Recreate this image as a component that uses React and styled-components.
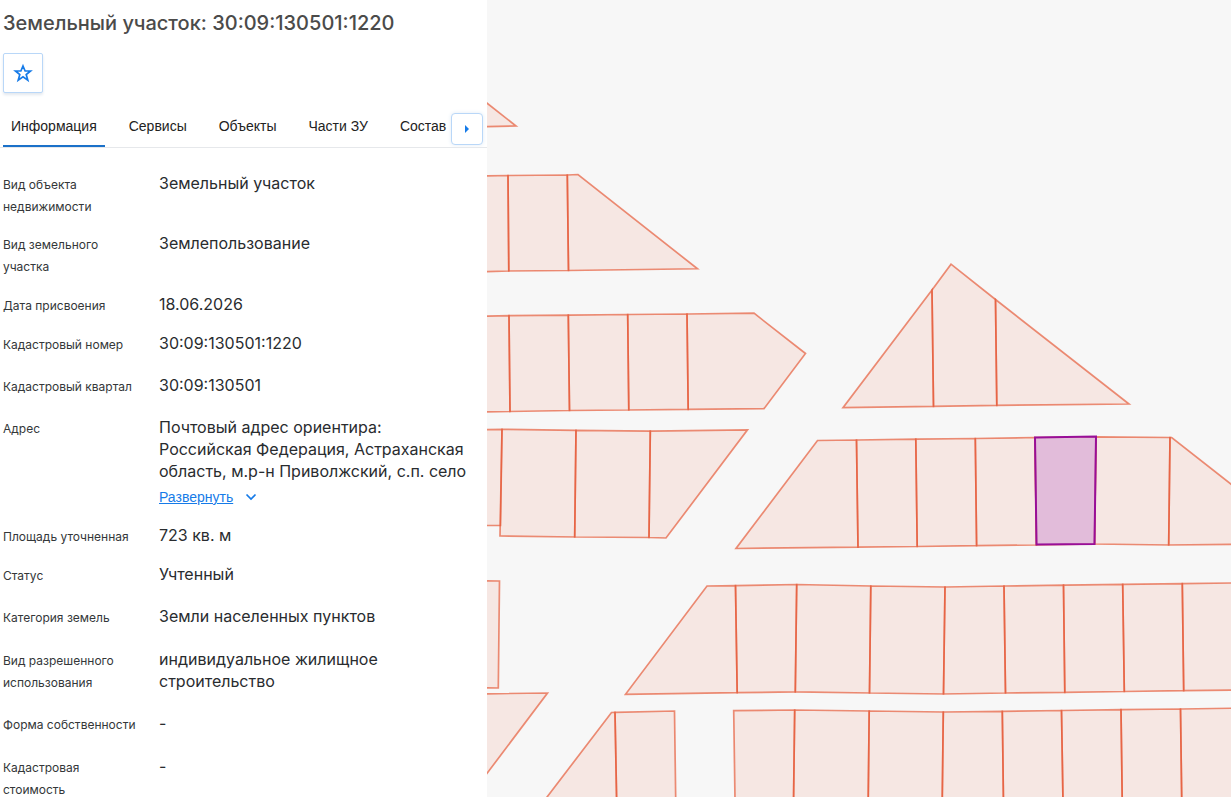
import React from "react";
import styled, { createGlobalStyle } from "styled-components";

const GlobalStyle = createGlobalStyle`
  * { box-sizing: border-box; }
  html, body, #root { height: 100%; }
  body { margin: 0; background: #fff; overflow: hidden; font-family: Inter, sans-serif; }
`;

const Page = styled.div`
  display: flex;
  height: 100%;
`;

const Panel = styled.aside`
  flex: 0 1 487px;
  min-width: 320px;
  overflow: hidden;
  background: #fff;
  color: #292c2f;
`;

const Title = styled.h1`
  margin: 0;
  padding: 9px 3px 16px;
  font-size: 20px;
  line-height: 28px;
  font-weight: 500;
  color: #4b4b4a;
`;

const FavoriteButton = styled.button`
  display: grid;
  place-items: center;
  width: 40px;
  height: 40px;
  margin-left: 3px;
  padding: 0;
  border: 1px solid #b9d7f8;
  border-radius: 2px;
  background: #fff;
  color: #167be8;
  box-shadow: 0 2px 3px #e3e8ee;
`;

const TabBar = styled.div`
  display: flex;
  height: 43px;
  margin-top: 12px;
  padding-left: 3px;
  border-bottom: 1px solid #e6e8eb;
`;

const TabList = styled.div`
  display: flex;
  gap: 16px;
  flex: 1;
  overflow: hidden;
`;

const Tab = styled.button`
  flex: none;
  padding: 2px 8px 0;
  border: 0;
  border-bottom: 2px solid ${(p) => (p.$active ? "#1b71c9" : "transparent")};
  background: none;
  color: #222;
  font: 14px/38px "Liberation Sans", Arial, sans-serif;
`;

const ScrollButton = styled.button`
  display: grid;
  place-items: center;
  width: 32px;
  height: 32px;
  margin: 8px 4px 0 0;
  padding: 0;
  border: 1px solid #b9d7f8;
  border-radius: 4px;
  background: #fff;
  color: #167be8;
  box-shadow: 0 0 4px #e3ecf5;
`;

const Details = styled.dl`
  margin: 0;
  padding: 24px 16px 0 3px;
`;

const Row = styled.div`
  display: grid;
  grid-template-columns: 140px 1fr;
  column-gap: 16px;
  margin-bottom: ${(p) => p.$gap}px;
`;

const Label = styled.dt`
  padding-top: 2px;
  margin-bottom: -2px;
  font-size: 12px;
  line-height: 22px;
  color: #343739;
`;

const Value = styled.dd`
  margin: 0;
  font-size: 16px;
  line-height: 22px;
`;

const ExpandLink = styled.a`
  display: flex;
  align-items: center;
  gap: 12px;
  height: 26px;
  padding-top: 4px;
  font: 14px/22px "Liberation Sans", Arial, sans-serif;
  color: #167be8;
`;

const MapArea = styled.main`
  flex: 1;
  min-width: 0;
  overflow: hidden;
  background: #f7f7f7;
`;

const MapDrawing = styled.svg`
  display: block;
  width: 100%;
  height: 100%;
`;

const Parcel = styled.polygon`
  fill: ${(p) => (p.$selected ? "#d6a0d3" : "#f27450")};
  fill-opacity: ${(p) => (p.$selected ? 0.6 : 0.12)};
  stroke: ${(p) => (p.$selected ? "#980e98" : "#e5532f")};
  stroke-width: ${(p) => (p.$selected ? 2 : 1.7)};
  stroke-opacity: ${(p) => (p.$selected ? 1 : 0.65)};
`;

const TABS = ["Информация", "Сервисы", "Объекты", "Части ЗУ", "Состав"];

const FIELDS = [
  { label: "Вид объекта недвижимости", value: "Земельный участок", gap: 16 },
  { label: "Вид земельного участка", value: "Землепользование", gap: 17 },
  { label: "Дата присвоения", value: "18.06.2026", gap: 17 },
  { label: "Кадастровый номер", value: "30:09:130501:1220", gap: 20 },
  { label: "Кадастровый квартал", value: "30:09:130501", gap: 20 },
  {
    label: "Адрес",
    value: "Почтовый адрес ориентира: Российская Федерация, Астраханская область, м.р-н Приволжский, с.п. село",
    gap: 16,
    expandable: true,
  },
  { label: "Площадь уточненная", value: "723 кв. м", gap: 17 },
  { label: "Статус", value: "Учтенный", gap: 20 },
  { label: "Категория земель", value: "Земли населенных пунктов", gap: 21 },
  { label: "Вид разрешенного использования", value: "индивидуальное жилищное строительство", gap: 20 },
  { label: "Форма собственности", value: "-", gap: 21 },
  { label: "Кадастровая стоимость", value: "-", gap: 20 },
];

// Each block is a run of parcels: pairs of [top point, bottom point] along
// the block, where neighbours share the edge between them.
const BLOCKS = [
  [[[470, 176], [470, 272]], [[508, 175.5], [508.8, 271]], [[567.3, 175], [568.5, 270.5]], [[578, 174.5], [697.5, 268.8]]],
  [[[470, 316.5], [470, 412]], [[509, 315.7], [510, 411.5]], [[568.3, 315.2], [569.5, 410.5]], [[627.7, 314.5], [628.8, 410]], [[687, 314], [688.2, 409.3]]],
  [[[502, 429.3], [500, 536]], [[576, 430.3], [574.7, 537]], [[650.3, 431.2], [649, 537.5]], [[747.5, 429.8], [666, 538]]],
  [[[817.5, 440.5], [736, 548.5]], [[856.5, 440], [858, 547.2]], [[915.8, 439.2], [917.2, 546.5]], [[975.3, 438.5], [976.6, 545.7]], [[1035, 437.5], [1036.5, 545]], [[1096, 436.8], [1094.5, 544]], [[1170, 437.5], [1168.7, 545]]],
  [[[707, 586], [625.5, 694.3]], [[735.5, 585.7], [737.2, 692.7]], [[796.7, 584.5], [795.3, 691.8]], [[870.8, 586], [869.5, 693]], [[945, 587], [943.5, 694]], [[1004, 586], [1005.5, 693]], [[1063.5, 585.2], [1064.8, 692.3]], [[1122.7, 584.3], [1124.3, 691.5]], [[1182.3, 583.7], [1183.7, 690.7]], [[1250, 582.7], [1250, 690]]],
  [[[611.5, 712.5], [529.5, 820]], [[615, 712.4], [617, 820]], [[674.5, 711], [676, 820]]],
  [[[733.7, 710.7], [735.3, 820]], [[794.7, 710], [793.3, 820]], [[869.2, 711], [868, 820]], [[943.3, 712], [942, 820]], [[1002.3, 711.3], [1003.7, 820]], [[1061.5, 710.5], [1063.3, 820]], [[1121, 709.7], [1122.5, 820]], [[1180.5, 709], [1182, 820]], [[1250, 708], [1250, 820]]],
];

const SINGLE_PARCELS = [
  "449,73 516,126 449,127.5",
  "687,314 754,313.2 805.5,353.5 764,408.7 688.2,409.3",
  "470,430 502,429.3 500.5,525.5 470,525.5",
  "470,580.8 499.5,581 498.3,688 470,687.5",
  "470,694 547.5,693 470,796",
  "932,290 933.5,406.3 843,407.7",
  "932,290 951,264.2 995.5,299.5 996.8,405.3 933.5,406.3",
  "995.5,299.5 1129,404 996.8,405.3",
  "1170,437.5 1171.7,437.5 1260,507 1260,544 1168.7,545",
];

const blockParcels = BLOCKS.flatMap((block) =>
  block.slice(1).map((right, i) => {
    const left = block[i];
    return [left[0], right[0], right[1], left[1]].map((p) => p.join(",")).join(" ");
  })
);

function StarIcon() {
  return (
    <svg width="20" height="20" viewBox="0 0 20 20" fill="none" stroke="currentColor" strokeWidth="1.7" aria-hidden="true">
      <path d="M10 3l2.100 5h5.400l-4.300 3.500 1.600 5.700-4.800-3.300-4.800 3.300 1.600-5.700L2.500 8h5.400z" />
    </svg>
  );
}

export default function App() {
  return (
    <Page>
      <GlobalStyle />
      <Panel>
        <Title>Земельный участок: 30:09:130501:1220</Title>
        <FavoriteButton aria-label="Добавить в избранное">
          <StarIcon />
        </FavoriteButton>
        <TabBar>
          <TabList role="tablist">
            {TABS.map((name, i) => (
              <Tab key={name} role="tab" aria-selected={i === 0} $active={i === 0}>
                {name}
              </Tab>
            ))}
          </TabList>
          <ScrollButton aria-label="Следующие вкладки">
            <svg width="6" height="10" viewBox="0 0 6 10" fill="currentColor" aria-hidden="true">
              <path d="M1 1l4 4-4 4z" />
            </svg>
          </ScrollButton>
        </TabBar>
        <Details>
          {FIELDS.map((f) => (
            <Row key={f.label} $gap={f.gap}>
              <Label>{f.label}</Label>
              <Value>
                {f.value}
                {f.expandable && (
                  <ExpandLink href="#address">
                    Развернуть
                    <svg width="12" height="8" viewBox="0 0 12 8" fill="none" stroke="currentColor" strokeWidth="1.7" aria-hidden="true">
                      <path d="M1.500 1.500L6 6l4.500-4.500" />
                    </svg>
                  </ExpandLink>
                )}
              </Value>
            </Row>
          ))}
        </Details>
      </Panel>
      <MapArea>
        <MapDrawing viewBox="487 0 744 797" preserveAspectRatio="xMinYMin slice" role="img" aria-label="Кадастровая карта">
          {[...blockParcels, ...SINGLE_PARCELS].map((points) => (
            <Parcel key={points} points={points} />
          ))}
          <Parcel $selected points="1035,437.5 1096,436.5 1094.5,544 1036.5,544.5" />
        </MapDrawing>
      </MapArea>
    </Page>
  );
}
